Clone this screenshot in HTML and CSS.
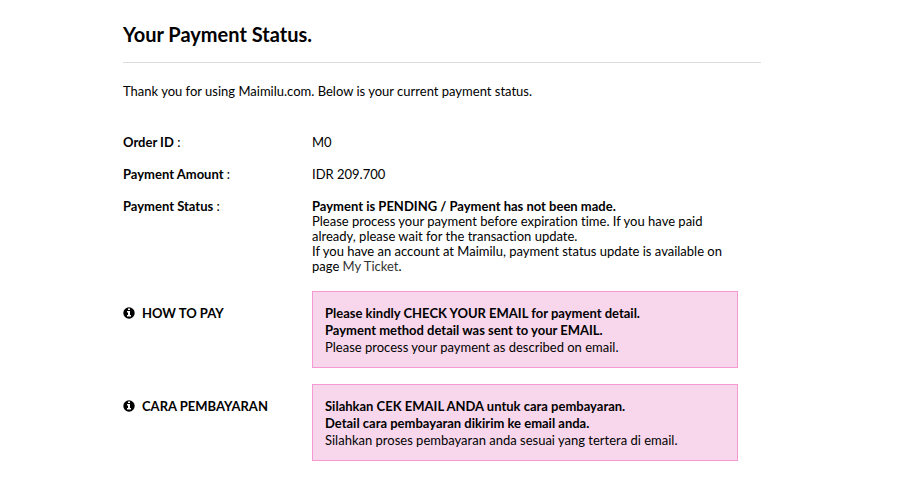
FILE: index.html
```html
<!DOCTYPE html>
<html lang="en">
<head>
  <meta charset="UTF-8">
  <meta name="viewport" content="width=device-width, initial-scale=1.0">
  <title>Your Payment Status</title>
  <link rel="stylesheet" href="styles.css">
</head>
<body>

<main class="container">
  <h1>Your Payment Status.</h1>
  <p class="intro">Thank you for using Maimilu.com. Below is your current payment status.</p>

  <dl class="details">
    <dt><strong>Order ID</strong> :</dt>
    <dd>M0</dd>

    <dt><strong>Payment Amount</strong> :</dt>
    <dd>IDR 209.700</dd>

    <dt><strong>Payment Status</strong> :</dt>
    <dd>
      <strong>Payment is PENDING / Payment has not been made.</strong>
      <p>Please process your payment before expiration time. If you have paid already, please wait for the transaction update.</p>
      <p>If you have an account at Maimilu, payment status update is available on page <a href="#">My Ticket</a>.</p>
    </dd>
  </dl>

  <section class="guide">
    <h2>
      <svg class="icon" viewBox="0 0 12 12" aria-hidden="true">
        <circle cx="6" cy="6" r="5.7" fill="#000"/>
        <path d="M5 1.500h2v1.500H5zM4 4h3v4h1v1.500H4V8h1V5.500H4z" fill="#fff"/>
      </svg>
      HOW TO PAY
    </h2>
    <div class="notice">
      <strong>Please kindly CHECK YOUR EMAIL for payment detail.</strong><br>
      <strong>Payment method detail was sent to your EMAIL.</strong><br>
      Please process your payment as described on email.
    </div>
  </section>

  <section class="guide" lang="id">
    <h2>
      <svg class="icon" viewBox="0 0 12 12" aria-hidden="true">
        <circle cx="6" cy="6" r="5.7" fill="#000"/>
        <path d="M5 1.500h2v1.500H5zM4 4h3v4h1v1.500H4V8h1V5.500H4z" fill="#fff"/>
      </svg>
      CARA PEMBAYARAN
    </h2>
    <div class="notice">
      <strong>Silahkan CEK EMAIL ANDA untuk cara pembayaran.</strong><br>
      <strong>Detail cara pembayaran dikirim ke email anda.</strong><br>
      Silahkan proses pembayaran anda sesuai yang tertera di email.
    </div>
  </section>
</main>

</body>
</html>
```

FILE: styles.css
```css
* {
  box-sizing: border-box;
}
body {
  margin: 0;
  background: #fff;
  color: #000;
  font-family: Lato, sans-serif;
  font-size: 13px;
  line-height: 16px;
  font-variant-ligatures: none;
}
.container {
  max-width: 638px;
  margin-left: 123px;
  padding: 20px 0;
}
h1 {
  margin: 0 0 20px;
  padding-bottom: 14px;
  border-bottom: 1px solid #ddd;
  font-size: 20px;
  line-height: 28px;
}
.intro {
  margin: 0 0 35px;
}
.details, .guide {
  display: grid;
  grid-template-columns: 189px 1fr;
  padding-right: 23px;
}
.details {
  row-gap: 16px;
  margin: 0 0 17px;
}
dd {
  margin: 0;
}
dd p {
  margin: 0;
  line-height: 15px;
}
a {
  color: #333;
  text-decoration: none;
}
.guide {
  margin-bottom: 16px;
}
h2 {
  display: flex;
  align-items: center;
  align-self: start;
  gap: 7px;
  margin: 14px 0 0;
  font-size: 13px;
  line-height: 16px;
}
.icon {
  width: 12px;
  height: 12px;
}
.notice {
  padding: 13px 12px 11px;
  border: 1px solid #f49ad3;
  background: #f8d7ec;
  line-height: 17px;
}
```
